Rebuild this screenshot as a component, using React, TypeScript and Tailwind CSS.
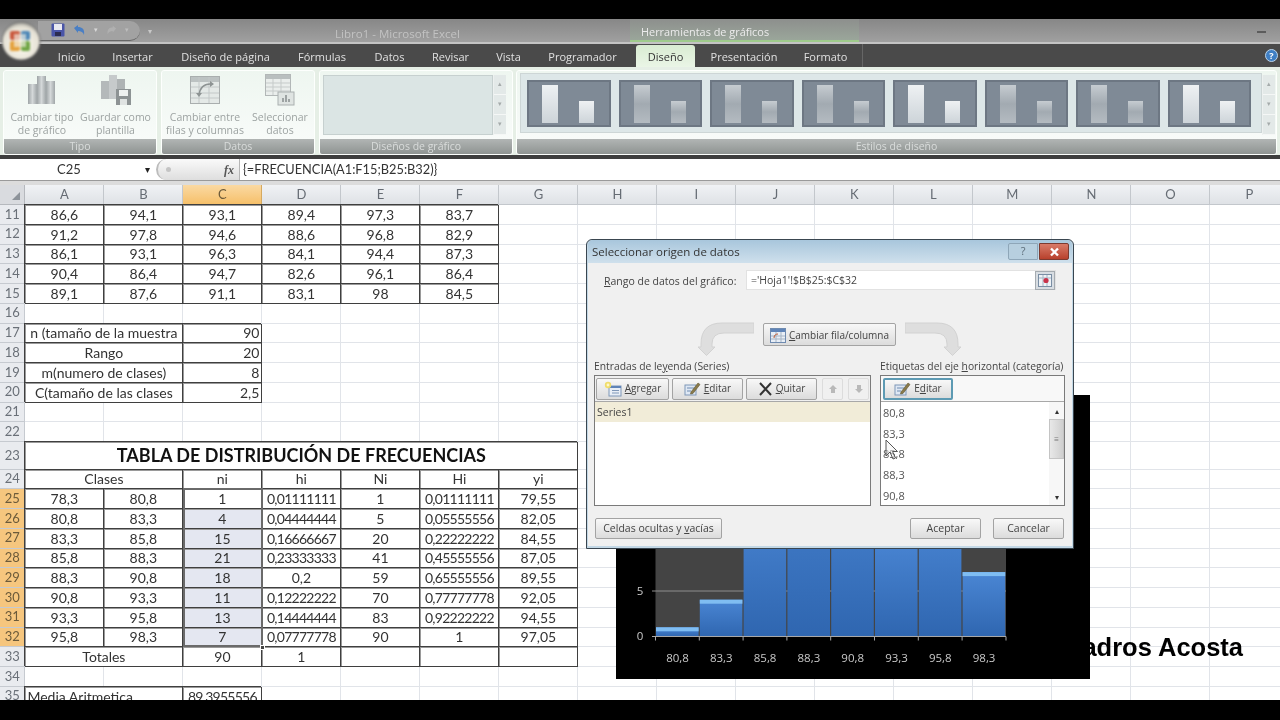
import React from "react";

const COLS = ["A","B","C","D","E","F","G","H","I","J","K","L","M","N","O","P"];
type C = { t?: string; s?: number; a?: "l"|"c"|"r"; b?: boolean; fill?: boolean; big?: boolean };
type R = { n: number; h?: string; sel?: boolean; cells: C[] };

const six = (n: number, v: string[]): R => ({ n, cells: v.map((t) => ({ t, b: true })) });
const blank = (n: number): R => ({ n, cells: [] });
const kv = (n: number, k: string, v: string): R => ({ n, cells: [{ t: k, s: 2, b: true }, { t: v, a: "r", b: true }] });
const freq = (n: number, v: string[], fill: boolean): R => ({
  n, sel: true,
  cells: v.map((t, i) => ({ t, b: true, fill: i === 2 && fill })),
});

const ROWS: R[] = [
  six(11, ["86,6","94,1","93,1","89,4","97,3","83,7"]),
  six(12, ["91,2","97,8","94,6","88,6","96,8","82,9"]),
  six(13, ["86,1","93,1","96,3","84,1","94,4","87,3"]),
  six(14, ["90,4","86,4","94,7","82,6","96,1","86,4"]),
  six(15, ["89,1","87,6","91,1","83,1","98","84,5"]),
  blank(16),
  kv(17, "n (tamaño de la muestra", "90"),
  kv(18, "Rango", "20"),
  kv(19, "m(numero de clases)", "8"),
  kv(20, "C(tamaño de las clases", "2,5"),
  blank(21),
  blank(22),
  { n: 23, h: "h-[27.5px]", cells: [{ t: "TABLA DE DISTRIBUCIÓN DE FRECUENCIAS", s: 7, b: true, big: true }] },
  { n: 24, cells: [{ t: "Clases", s: 2, b: true }, ...["ni","hi","Ni","Hi","yi"].map((t) => ({ t, b: true }))] },
  freq(25, ["78,3","80,8","1","0,01111111","1","0,01111111","79,55"], false),
  freq(26, ["80,8","83,3","4","0,04444444","5","0,05555556","82,05"], true),
  freq(27, ["83,3","85,8","15","0,16666667","20","0,22222222","84,55"], true),
  freq(28, ["85,8","88,3","21","0,23333333","41","0,45555556","87,05"], true),
  freq(29, ["88,3","90,8","18","0,2","59","0,65555556","89,55"], true),
  freq(30, ["90,8","93,3","11","0,12222222","70","0,77777778","92,05"], true),
  freq(31, ["93,3","95,8","13","0,14444444","83","0,92222222","94,55"], true),
  freq(32, ["95,8","98,3","7","0,07777778","90","1","97,05"], true),
  { n: 33, cells: [{ t: "Totales", s: 2, b: true }, { t: "90", b: true }, { t: "1", b: true }, { b: true }, { b: true }, { b: true }] },
  blank(34),
  { n: 35, cells: [{ t: "Media Aritmetica", s: 2, a: "l", b: true }, { t: "89,3955556", b: true }] },
];

function Cell({ c }: { c: C }) {
  const span = c.s ?? 1;
  const width = span === 1 ? "w-[79px]" : span === 2 ? "w-[158px]" : "w-[553px]";
  const border = c.b
    ? "border-r border-b border-[#3f3f3f] shadow-[-1px_-1px_0_0_#3f3f3f,inset_1px_1px_0_0_#9a9a9a]"
    : "border-r border-b border-[#e1e4e9]";
  const align = c.a === "r" ? "justify-end pr-[2px]" : c.a === "l" ? "justify-start pl-[2px]" : "justify-center";
  const fill = c.fill ? "bg-[#e4e7f1]" : "";
  const long = (c.t ?? "").length >= 8 && /^[\d,]+$/.test(c.t ?? "");
  const text = c.big ? "text-[18px] font-bold text-[#111]" : long ? "text-[14px] tracking-[-0.75px] text-[#333]" : "text-[14px] text-[#333]";
  return <div className={`${width} ${border} ${align} ${fill} ${text} shrink-0 h-full flex items-center whitespace-nowrap overflow-hidden`}>{c.t}</div>;
}

function Row({ r }: { r: R }) {
  const used = r.cells.reduce((s, c) => s + (c.s ?? 1), 0);
  const rest = Array.from({ length: 16 - used });
  return (
    <div className={`flex ${r.h ?? "h-[19.75px]"} shrink-0`}>
      <div className={`w-[25.4px] shrink-0 flex items-center justify-center text-[13px] border-r border-b border-[#c6cad0] ${r.sel ? "bg-[#f6c67e] text-[#6b5a3a]" : "bg-[#e9ebef] text-[#6a7078]"}`}>{r.n}</div>
      {r.cells.map((c, i) => <Cell key={i} c={c} />)}
      {rest.map((_, i) => <Cell key={"e" + i} c={{}} />)}
    </div>
  );
}

function ColHeader() {
  return (
    <div className="flex h-[20px] shrink-0">
      <div className="w-[25.4px] shrink-0 bg-[#d9dbdf] border-r border-b border-[#b5b8bd] flex items-end justify-end p-[3px]">
        <svg width="10" height="10" viewBox="0 0 10 10"><path d="M9 1V9H1Z" fill="#8d939a" /></svg>
      </div>
      {COLS.map((c) => (
        <div key={c} className={`w-[79px] shrink-0 flex items-center justify-center text-[13px] border-r border-b ${c === "C" ? "bg-gradient-to-b from-[#fad9a2] to-[#f6c069] border-[#d5a960] text-[#6b5a3a]" : "bg-gradient-to-b from-[#f0f2f5] to-[#dfe2e6] border-[#c3c7cc] text-[#666c74]"}`}>{c}</div>
      ))}
    </div>
  );
}

function BarsIcon({ w = 30, h = 30 }: { w?: number; h?: number }) {
  return (
    <svg width={w} height={h} viewBox="0 0 30 30">
      <defs><linearGradient id="gb" x1="0" x2="1" y1="0" y2="0"><stop offset="0" stopColor="#9ea4a6" /><stop offset="0.5" stopColor="#d4d8d9" /><stop offset="1" stopColor="#a0a6a8" /></linearGradient></defs>
      <rect x="1" y="9" width="9" height="20" fill="url(#gb)" />
      <rect x="10" y="1" width="9" height="28" fill="url(#gb)" />
      <rect x="19" y="6" width="9" height="23" fill="url(#gb)" />
    </svg>
  );
}

function SaveBarsIcon() {
  return (
    <svg width="32" height="32" viewBox="0 0 32 32">
      <rect x="1" y="7" width="8" height="18" fill="#b4b9ba" />
      <rect x="9" y="1" width="8" height="24" fill="#c6cacb" />
      <rect x="17" y="5" width="8" height="14" fill="#aeb3b4" />
      <rect x="16" y="15" width="15" height="16" fill="#8d9394" />
      <rect x="19" y="16" width="9" height="6" fill="#eef1f0" />
      <rect x="20" y="25" width="7" height="6" fill="#dfe3e2" />
    </svg>
  );
}

function TableArrowIcon() {
  return (
    <svg width="30" height="28" viewBox="0 0 30 28">
      <rect x="0.5" y="0.5" width="29" height="27" fill="#e4e9e7" stroke="#a9aeae" />
      <rect x="1" y="1" width="28" height="5" fill="#bcc2c2" />
      <path d="M1 11H29M1 17H29M1 22H29M9 1V27M19 1V27" stroke="#c3c8c8" />
      <path d="M20 8C14 8 10 12 9 19" stroke="#8d9393" strokeWidth="1.6" fill="none" />
      <path d="M20 5L24 8L20 11ZM6 17H12L9 21Z" fill="#8d9393" />
    </svg>
  );
}

function TableChartIcon() {
  return (
    <svg width="30" height="32" viewBox="0 0 30 32">
      <rect x="0.5" y="0.5" width="25" height="21" fill="#eaeeec" stroke="#b2b7b7" />
      <rect x="1" y="1" width="24" height="4" fill="#b9bfbf" />
      <path d="M1 9H25M1 13H25M1 17H25M8 5V21M16 5V21" stroke="#c6cbca" />
      <rect x="13" y="18" width="16" height="13" fill="#dfe4e2" stroke="#aab0b0" />
      <path d="M17 28V24H19V28ZM20 28V21H22V28ZM23 28V25H25V28Z" fill="#9da3a3" />
    </svg>
  );
}

function RibbonButton({ icon, l1, l2, w, iconH = "h-[34px]" }: { icon: React.ReactNode; l1: string; l2: string; w: string; iconH?: string }) {
  return (
    <div className={`${w} flex flex-col items-center`}>
      <div className={`${iconH} flex items-center justify-center`}>{icon}</div>
      <div className="mt-[2px] text-[10.5px] leading-[13px] text-[#9da3a2] text-center whitespace-nowrap">{l1}<br />{l2}</div>
    </div>
  );
}

function Group({ label, w, children }: { label: string; w: string; children: React.ReactNode }) {
  return (
    <div className={`${w} h-[85px] flex flex-col rounded-[3px] border border-[#fdfffd] bg-gradient-to-b from-[#eef6f0] to-[#fafcfb] overflow-hidden`}>
      <div className="h-[69px] flex">{children}</div>
      <div className="h-[15px] bg-gradient-to-b from-[#b1b5b4] to-[#8f9492] flex items-center justify-center text-[10.5px] text-[#d9dcdb]">{label}</div>
    </div>
  );
}

function ScrollColumn() {
  return (
    <div className="w-[13px] h-[60px] mt-[4px] flex flex-col bg-[#e3e9e8] border-l border-[#edf1f0]">
      {["▴","▾","▾"].map((g, i) => (
        <div key={i} className="flex-1 flex items-center justify-center text-[7px] text-[#a5abab] border-b border-[#f5f7f6]">{g}</div>
      ))}
    </div>
  );
}

function Thumb({ light }: { light?: boolean }) {
  const bar = light ? "bg-gradient-to-b from-[#eef1f3] to-[#cdd4d9]" : "bg-gradient-to-b from-[#c6ccd1] via-[#a2aab1] to-[#b4bbc1]";
  return (
    <div className="w-[83.5px] h-[47px] bg-[#7f8a96] border-2 border-[#6d7783] flex items-end pb-[2px] pl-[13px]">
      <div className={`w-[16px] h-[38px] ${bar}`} />
      <div className={`w-[15px] h-[22px] ml-[21px] ${bar}`} />
    </div>
  );
}

function MiniBtn({ children, w, focus }: { children: React.ReactNode; w: string; focus?: boolean }) {
  return (
    <div className={`${w} h-[22px] flex items-center justify-center gap-[3px] rounded-[2px] text-[10px] text-[#444] bg-gradient-to-b from-[#f8f8f8] to-[#dcdcdc] ${focus ? "border-2 border-[#5d9ab3]" : "border border-[#a3a3a3]"}`}>
      {children}
    </div>
  );
}

function EditIcon() {
  return (
    <svg width="17" height="15" viewBox="0 0 17 15">
      <rect x="1" y="4" width="11" height="10" fill="#dfe8f4" stroke="#7f97b8" />
      <path d="M3 7H10M3 10H7" stroke="#6f8bb0" />
      <path d="M7 11L14 2L16 3.5L9 12.5L6.5 13Z" fill="#8a7a4a" stroke="#5e5530" strokeWidth="0.6" />
    </svg>
  );
}

function AddIcon() {
  return (
    <svg width="18" height="16" viewBox="0 0 18 16">
      <rect x="5" y="5" width="12" height="10" fill="#e8eef6" stroke="#7f97b8" />
      <rect x="5" y="5" width="12" height="2" fill="#5f84b8" />
      <path d="M8 9.5H15M8 12H15" stroke="#7f97b8" />
      <circle cx="4" cy="4" r="3.2" fill="#f0dd6c" />
      <circle cx="4" cy="4" r="1.4" fill="#fff8c8" />
    </svg>
  );
}

function CurveArrow({ flip }: { flip?: boolean }) {
  return (
    <svg width="56" height="34" viewBox="0 0 56 34" className={flip ? "-scale-x-100" : ""}>
      <path d="M56 1H24Q3 1 3 22V25H0L8.5 33.5L17 25H14V22Q14 11 26 11H56Z" fill="#dedede" stroke="#d2d2d2" />
    </svg>
  );
}

function OfficeButton() {
  return (
    <svg width="40" height="40" viewBox="0 0 40 40" className="absolute left-[1px] top-[21px] blur-[0.8px]">
      <defs>
        <radialGradient id="ob" cx="0.5" cy="0.6" r="0.6"><stop offset="0" stopColor="#fffdf2" /><stop offset="0.8" stopColor="#e4e0d4" /><stop offset="1" stopColor="#8f8f8a" /></radialGradient>
      </defs>
      <circle cx="20" cy="20" r="19" fill="url(#ob)" stroke="#6d6d6d" />
      <rect x="9" y="10" width="10" height="9" rx="2" fill="#c9573c" />
      <rect x="20" y="10" width="9" height="9" rx="2" fill="#4c86b6" />
      <rect x="9" y="20" width="10" height="10" rx="2" fill="#e4a13c" />
      <rect x="20" y="20" width="9" height="10" rx="2" fill="#6fa544" />
      <rect x="13" y="13" width="12" height="13" fill="#f4f1e6" opacity="0.65" />
    </svg>
  );
}

function Chart() {
  const vals = [1, 4, 15, 21, 18, 11, 13, 7];
  const labels = ["80,8","83,3","85,8","88,3","90,8","93,3","95,8","98,3"];
  const base = 241.5;
  return (
    <svg width="474" height="284" viewBox="0 0 474 284" className="absolute left-[616px] top-[395px]">
      <defs>
        <linearGradient id="bar" x1="0" x2="0" y1="0" y2="1"><stop offset="0" stopColor="#4a86d4" /><stop offset="1" stopColor="#2f66b0" /></linearGradient>
      </defs>
      <rect width="474" height="284" fill="#000" />
      <rect x="39.5" y="11" width="350.5" height="230.5" fill="#444" />
      <path d="M36 196H390" stroke="#8d8d8d" />
      {vals.map((v, i) => {
        const h = v * 9.2;
        const x = 39.5 + i * 43.8;
        return (
          <g key={i}>
            <rect x={x + 0.5} y={base - h} width="42.6" height={h} fill="url(#bar)" />
            <rect x={x + 0.5} y={base - h} width="42.6" height="4" fill="#7fbdf2" />
          </g>
        );
      })}
      <path d={`M36 ${base}H390`} stroke="#a8a8a8" />
      {vals.map((_, i) => <path key={i} d={`M${39.5 + i * 43.8} ${base}v4`} stroke="#a8a8a8" />)}
      <path d={`M390 ${base}v4`} stroke="#a8a8a8" />
      {labels.map((l, i) => (
        <text key={l} x={61.5 + i * 43.8} y="267" fill="#c9c9c9" fontSize="11.5" textAnchor="middle" fontFamily="Open Sans, sans-serif">{l}</text>
      ))}
      <text x="24" y="200" fill="#c9c9c9" fontSize="11.5" textAnchor="middle" fontFamily="Open Sans, sans-serif">5</text>
      <text x="24" y="245" fill="#c9c9c9" fontSize="11.5" textAnchor="middle" fontFamily="Open Sans, sans-serif">0</text>
    </svg>
  );
}

function Dialog() {
  return (
    <div className="absolute left-[586px] top-[239px] w-[488px] h-[310px] rounded-t-[6px] border border-[#3a4650] bg-[#c3d8e6] flex flex-col px-[1px] pb-[2px] [font-family:'Open_Sans',sans-serif] text-[#444]">
      <div className="h-[23px] shrink-0 flex items-center pl-[4px] pr-[3px] text-[11.5px] text-[#333] bg-gradient-to-b from-[#a8c6dc] to-[#cfe0ec] rounded-t-[5px]">
        <span className="flex-1">Seleccionar origen de datos</span>
        <div className="w-[30px] h-[17px] border border-[#8ea6b8] rounded-l-[2px] flex items-center justify-center text-[11px] text-[#5c6c78] bg-[#b7cfdf]">?</div>
        <div className="w-[30px] h-[17px] ml-[1px] border border-[#7c3a30] rounded-r-[2px] flex items-center justify-center bg-gradient-to-b from-[#d87a68] to-[#b8402c]">
          <svg width="11" height="10" viewBox="0 0 11 10"><path d="M2 1.5L9 8.5M9 1.5L2 8.5" stroke="#fff" strokeWidth="2.4" /></svg>
        </div>
      </div>
      <div className="flex-1 bg-[#f0f0f0] pl-[6px] pr-[7px] flex flex-col">
        <div className="flex items-center h-[20px] mt-[7px]">
          <div className="w-[152px] pl-[10px] pt-[3px] text-[10.5px] whitespace-nowrap"><u>R</u>ango de datos del gráfico:</div>
          <div className="w-[310px] h-[20px] bg-white border border-[#e2e2e2] flex items-center pl-[4px] text-[10.5px] justify-between">
            <span className="pt-[2px]">='Hoja1'!$B$25:$C$32</span>
            <div className="w-[20px] h-[19px] bg-[#d8dde2] border border-[#a5abb0] flex items-center justify-center">
              <svg width="14" height="13" viewBox="0 0 14 13"><rect x="0.5" y="0.5" width="13" height="12" fill="#eef2f6" stroke="#7a8ea4" /><path d="M1 4H13M5 1V12M9 1V12" stroke="#a5b4c4" /><circle cx="8" cy="6.5" r="2.6" fill="#c8324a" /></svg>
            </div>
          </div>
        </div>
        <div className="flex items-start h-[33px] mt-[32px] pl-[104px] gap-[9px]">
          <CurveArrow />
          <div className="w-[133px] h-[23px] mt-[1px] pt-[1px] flex items-center justify-center gap-[3px] rounded-[2px] border border-[#a3a3a3] text-[10px] bg-gradient-to-b from-[#f8f8f8] to-[#dcdcdc]">
            <svg width="16" height="16" viewBox="0 0 16 16"><rect x="0.5" y="1.5" width="15" height="14" fill="#e8eef6" stroke="#6f8bb0" /><rect x="1" y="2" width="14" height="3" fill="#5f84b8" /><path d="M1 9H15M1 12H15M6 5V15M11 5V15" stroke="#a5b4c4" /><path d="M4 11C4 8 6 7 8 7" stroke="#c0572f" fill="none" /></svg>
            <span><u>C</u>ambiar fila/columna</span>
          </div>
          <CurveArrow flip />
        </div>
        <div className="flex gap-[9px] h-[15px] mt-[4px] text-[10.3px] leading-[15px] whitespace-nowrap">
          <div className="w-[277px]">Entradas de le<u>y</u>enda (Series)</div>
          <div className="w-[185px]">Etiquetas del eje <u>h</u>orizontal (categoría)</div>
        </div>
        <div className="flex gap-[9px] h-[131px] mt-[1px]">
          <div className="w-[277px] border border-[#7a7a7a] bg-white flex flex-col">
            <div className="h-[26px] shrink-0 pl-[1px] bg-[#f0f0f0] border-b border-[#a8a8a8] flex items-center gap-[3px]">
              <MiniBtn w="w-[73px]"><AddIcon /><span><u>A</u>gregar</span></MiniBtn>
              <MiniBtn w="w-[71px]"><EditIcon /><span><u>E</u>ditar</span></MiniBtn>
              <MiniBtn w="w-[71px]">
                <svg width="15" height="14" viewBox="0 0 15 14"><path d="M2 1L13 13M13 1L2 13" stroke="#333" strokeWidth="2" /></svg>
                <span><u>Q</u>uitar</span>
              </MiniBtn>
              <div className="w-[21px] h-[22px] ml-[2px] border border-[#dcdcdc] rounded-[2px] flex items-center justify-center">
                <svg width="10" height="10" viewBox="0 0 10 10"><path d="M5 1L9 5H7V9H3V5H1Z" fill="#b9b9b9" /></svg>
              </div>
              <div className="w-[21px] h-[22px] ml-[2px] border border-[#dcdcdc] rounded-[2px] flex items-center justify-center">
                <svg width="10" height="10" viewBox="0 0 10 10"><path d="M5 9L9 5H7V1H3V5H1Z" fill="#b9b9b9" /></svg>
              </div>
            </div>
            <div className="h-[20px] bg-[#f1ecd8] flex items-center pl-[2px] pt-[1px] text-[10.5px]">Series1</div>
          </div>
          <div className="w-[185px] border border-[#7a7a7a] bg-white flex flex-col">
            <div className="h-[26px] shrink-0 pl-[2px] bg-[#f8f8f8] border-b border-[#a8a8a8] flex items-center">
              <MiniBtn w="w-[70px]" focus><EditIcon /><span>E<u>d</u>itar</span></MiniBtn>
            </div>
            <div className="flex-1 flex overflow-hidden">
              <div className="flex-1 pl-[2px] pt-[1px] text-[11px] text-[#555]">
                {["80,8","83,3","85,8","88,3","90,8"].map((v) => <div key={v} className="h-[20.7px] flex items-center">{v}</div>)}
              </div>
              <div className="w-[15px] flex flex-col items-center bg-[#f7f7f7]">
                <div className="h-[17px] flex items-center text-[8px] text-[#333]">▴</div>
                <div className="w-[15px] h-[40px] bg-gradient-to-r from-[#e8e8e8] to-[#cfcfcf] border border-[#c4c4c4] flex items-center justify-center text-[8px] text-[#777]">≡</div>
                <div className="flex-1" />
                <div className="h-[17px] flex items-center text-[8px] text-[#333]">▾</div>
              </div>
            </div>
          </div>
        </div>
        <div className="flex items-center h-[21px] mt-[12px] pr-[1px] text-[10.5px]">
          <div className="w-[127px] h-[21px] ml-[1px] pt-[1px] rounded-[2px] border border-[#a3a3a3] bg-gradient-to-b from-[#f8f8f8] to-[#dcdcdc] flex items-center justify-center"><span>Celdas ocultas y <u>v</u>acías</span></div>
          <div className="flex-1" />
          <div className="w-[71px] h-[21px] pt-[1px] rounded-[2px] border border-[#a3a3a3] bg-gradient-to-b from-[#f8f8f8] to-[#dcdcdc] flex items-center justify-center">Aceptar</div>
          <div className="w-[71px] h-[21px] ml-[12px] pt-[1px] rounded-[2px] border border-[#a3a3a3] bg-gradient-to-b from-[#f8f8f8] to-[#dcdcdc] flex items-center justify-center">Cancelar</div>
        </div>
      </div>
    </div>
  );
}

const TABS: [string, string][] = [
  ["Inicio","w-[57px]"],["Insertar","w-[65px]"],["Diseño de página","w-[121px]"],["Fórmulas","w-[72px]"],
  ["Datos","w-[63px]"],["Revisar","w-[59px]"],["Vista","w-[57px]"],["Programador","w-[91px]"],
];

export default function App() {
  return (
    <div className="relative w-[1280px] h-[720px] overflow-hidden bg-black flex flex-col blur-[0.6px] [font-family:'Open_Sans',sans-serif]">
      <div className="h-[19px] shrink-0 bg-black" />
      {/* title bar */}
      <div className="relative h-[25px] shrink-0 bg-gradient-to-b from-[#878787] to-[#a0a0a0] border-b-2 border-[#c4c4c4] flex items-center">
        <div className="ml-[38px] w-[102px] h-[20px] rounded-r-full bg-[#a2a2a2] border-b border-[#666] flex items-center pl-[13px] gap-[7px]">
          <svg width="14" height="14" viewBox="0 0 14 14"><rect x="0.5" y="0.5" width="13" height="13" rx="1" fill="#4a55a8" /><rect x="3" y="1" width="8" height="6" fill="#e8e8f0" /><rect x="4" y="9" width="6" height="4" fill="#2c2c50" /></svg>
          <svg width="15" height="13" viewBox="0 0 15 13"><path d="M2 4L6 1V3C10 3 13 5 12 11C11 8 9 7 6 7V9Z" fill="#4a7fc4" /></svg>
          <span className="text-[7px] text-[#d8d8d8]">▾</span>
          <svg width="13" height="11" viewBox="0 0 15 13"><path d="M13 4L9 1V3C5 3 2 5 3 11C4 8 6 7 9 7V9Z" fill="#b0b0b0" /></svg>
          <span className="text-[7px] text-[#bdbdbd]">▾</span>
        </div>
        <span className="ml-[8px] text-[8px] text-[#c8c8c8]">▾</span>
        <div className="ml-[183px] w-[125px] pt-[6px] text-center text-[11.5px] text-[#c2c2c2] whitespace-nowrap">Libro1 - Microsoft Excel</div>
        <div className="ml-[170px] w-[229px] h-[23px] flex items-center pl-[11px] pt-[6px] text-[10.9px] text-[#ececec] bg-gradient-to-b from-[#8d8f8d] to-[#9aa69a] border-b-2 border-[#9fcb8c] whitespace-nowrap">Herramientas de gráficos</div>
        <div className="flex-1" />
        <div className="mr-[14px] mt-[3px] w-[9px] h-[2px] bg-[#5c5c5c]" />
      </div>
      {/* tabs */}
      <div className="h-[23px] shrink-0 bg-[#4a4a4a] flex items-end pl-[43px] text-[11px] text-[#e0e0e0]">
        {TABS.map(([t, w]) => <div key={t} className={`${w} h-[21px] pt-[2px] flex items-center justify-center whitespace-nowrap`}>{t}</div>)}
        <div className="ml-[8px] w-[59px] h-[22px] pt-[2px] rounded-t-[3px] bg-gradient-to-b from-[#d9ecd2] to-[#eaf5e6] text-[#333] flex items-center justify-center">Diseño</div>
        <div className="w-[98px] h-[21px] pt-[2px] flex items-center justify-center">Presentación</div>
        <div className="w-[65px] h-[21px] pt-[2px] flex items-center justify-center">Formato</div>
        <div className="ml-[4px] w-px h-[23px] bg-[#666]" />
        <div className="flex-1" />
        <svg width="13" height="13" viewBox="0 0 13 13" className="mr-[2px] mb-[5px]"><circle cx="6.5" cy="6.5" r="6" fill="#3f7fc4" stroke="#bcd4ea" /><text x="6.5" y="10" fontSize="9" fontWeight="700" fill="#fff" textAnchor="middle">?</text></svg>
      </div>
      {/* ribbon */}
      <div className="h-[88px] shrink-0 bg-[#e6efe6] flex items-start pt-[3px] pl-[3px] gap-[4px]">
        <Group label="Tipo" w="w-[154px]">
          <RibbonButton w="w-[76px]" icon={<BarsIcon />} l1="Cambiar tipo" l2="de gráfico" iconH="h-[38px]" />
          <RibbonButton w="w-[71px]" icon={<SaveBarsIcon />} l1="Guardar como" l2="plantilla" iconH="h-[38px]" />
        </Group>
        <Group label="Datos" w="w-[154px]">
          <RibbonButton w="w-[86px]" icon={<TableArrowIcon />} l1="Cambiar entre" l2="filas y columnas" iconH="h-[38px]" />
          <RibbonButton w="w-[64px]" icon={<TableChartIcon />} l1="Seleccionar" l2="datos" iconH="h-[38px]" />
        </Group>
        <Group label="Diseños de gráfico" w="w-[194px]">
          <div className="w-[170px] h-[60px] mt-[4px] ml-[3px] bg-[#dbe5e4] border border-[#c6d0cf]" />
          <ScrollColumn />
        </Group>
        <div className="-ml-px">
          <Group label="Estilos de diseño" w="w-[761px]">
            <div className="w-[742px] h-[60px] mt-[2px] ml-[3px] bg-[#dde7e8] border border-[#cdd6d6] flex items-center pl-[6px] gap-[8px]">
              <Thumb light />
              <Thumb /><Thumb /><Thumb />
              <Thumb light />
              <Thumb /><Thumb /><Thumb light />
            </div>
            <ScrollColumn />
          </Group>
        </div>
      </div>
      <div className="h-[4px] shrink-0 bg-[#3e3e3e]" />
      {/* formula bar */}
      <div className="h-[22px] shrink-0 bg-white border-b border-[#9a9a9a] flex items-center [font-family:Lato,sans-serif]">
        <div className="w-[138px] pt-[1px] text-center text-[13px] text-[#333]">C25</div>
        <span className="w-[18px] text-[10px] text-[#222] text-center">▾</span>
        <div className="w-[84px] h-[21px] rounded-l-full border-l-2 border-[#bcbcbc] bg-gradient-to-b from-[#fafafa] to-[#dedede] border-r border-r-[#b5b5b5] flex items-center pl-[8px] pr-[5px]">
          <span className="w-[5px] h-[5px] rounded-full bg-[#c4c4c4]" />
          <span className="flex-1" />
          <span className="text-[12px] italic font-bold text-[#555] [font-family:'Liberation_Serif',serif]">fx</span>
        </div>
        <div className="ml-[3px] pt-[1px] text-[12.8px] text-[#333] whitespace-nowrap">{"{=FRECUENCIA(A1:F15;B25:B32)}"}</div>
      </div>
      <div className="h-[4px] shrink-0 bg-[#dcdcdc]" />
      {/* sheet */}
      <div className="relative h-[515px] shrink-0 bg-white overflow-hidden [font-family:Lato,sans-serif]">
        <ColHeader />
        {ROWS.map((r) => <Row key={r.n} r={r} />)}
        <div className="absolute left-[183px] top-[303px] w-[80px] h-[159px] border-2 border-[#6a6a6a] pointer-events-none" />
        <div className="absolute left-[259.5px] top-[459.5px] w-[5px] h-[5px] bg-[#444] border border-white" />
      </div>
      <div className="flex-1 bg-black" />

      <Chart />
      <div className="absolute right-[37px] top-[631px] text-[25.5px] leading-[32px] font-bold text-black whitespace-nowrap [font-family:'Liberation_Sans',sans-serif]">Cuadros Acosta</div>
      <Dialog />
      <svg width="13" height="21" viewBox="0 0 13 21" className="absolute left-[885px] top-[439px]">
        <path d="M1 1V17L5 13L8 20L10.5 19L7.5 12.5H12.5Z" fill="#f4f4f4" fillOpacity="0.5" stroke="#555" />
      </svg>
      <OfficeButton />
    </div>
  );
}
